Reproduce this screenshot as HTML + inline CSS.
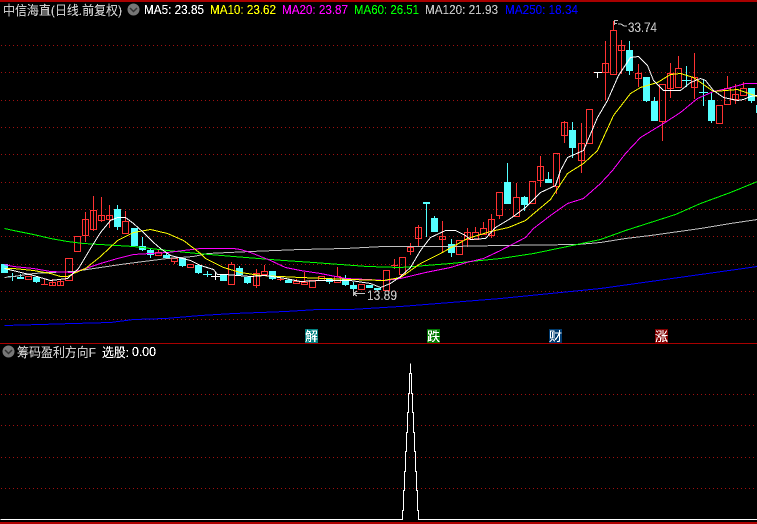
<!DOCTYPE html>
<html><head><meta charset="utf-8"><style>
html,body{margin:0;padding:0;background:#000}
body{width:757px;height:524px;overflow:hidden;position:relative}
svg{position:absolute;left:0;top:0}
text{font-family:"Liberation Sans","WenQuanYi Zen Hei","Noto Sans CJK SC",sans-serif;font-size:13px}
.c{font-family:"WenQuanYi Zen Hei","Liberation Sans","Noto Sans CJK SC",sans-serif;font-size:13px}
</style></head><body>
<svg width="757" height="524" viewBox="0 0 757 524" xmlns="http://www.w3.org/2000/svg">
<defs><filter id="px" x="0" y="0" width="100%" height="100%" filterUnits="userSpaceOnUse" color-interpolation-filters="sRGB"><feComponentTransfer><feFuncA type="discrete" tableValues="0 1 1"/></feComponentTransfer></filter></defs>
<rect width="757" height="524" fill="#000"/>
<g shape-rendering="crispEdges">
<path d="M1 45.5H757M1 72.5H757M1 100.5H757M1 127.5H757M1 154.5H757M1 182.5H757M1 209.5H757M1 236.5H757M1 264.5H757M1 291.5H757M1 319.5H757M1 394.5H757M1 425.5H757M1 457.5H757M1 488.5H757" stroke="#a01010" stroke-dasharray="1 3" fill="none"/>
<rect x="0" y="0" width="757" height="2" fill="#a80000"/>
<rect x="0" y="343" width="757" height="1" fill="#a80000"/>
<rect x="0" y="522" width="757" height="2" fill="#b00000"/>

<!-- red wicks -->
<path stroke="#ff3232" fill="none" d="M44.5 279V284M52.5 279V286M60.5 279V285M77.5 251V252M85.5 212V242M93.5 196V231M101.5 197V222M109.5 205V228M125.5 211V221M158.5 250V252M174.5 261V264M231.5 262V264M256.5 269V288M264.5 265V271M280.5 277V281M296.5 279V281M304.5 272V282M337.5 267V276M361.5 289V290M394.5 259V269M410.5 243V255M418.5 225V247M442.5 221V252M467.5 228V247M475.5 227V232M483.5 222V228M491.5 214V238M499.5 215V219M516.5 183V197M540.5 156V187M556.5 186V194M564.5 121V143M581.5 123V173M605.5 41V100M613.5 21V30M621.5 40V74M638.5 64V87M662.5 121V141M670.5 63V98M678.5 56V68M694.5 53V99M727.5 76V88M735.5 84V104M743.5 82V88"/>
<!-- red bodies -->
<path stroke="#ff3232" fill="none" d="M25.5 276.5h6v3h-6zM41 284.5h7M49.5 282.5h6v3h-6zM57.5 281.5h6v4h-6zM65.5 258.5h7v22h-7zM74.5 236.5h6v15h-6zM82.5 219.5h6v16h-6zM90.5 210.5h6v19h-6zM98.5 215.5h6v5h-6zM106.5 215.5h6v4h-6zM122.5 221.5h6v12h-6zM155.5 252.5h6v3h-6zM171.5 258.5h6v3h-6zM187.5 264.5h6v3h-6zM228.5 264.5h6v20h-6zM253.5 273.5h6v12h-6zM261.5 271.5h6v3h-6zM277 279.5h7M293.5 281.5h6v2h-6zM301.5 282.5h6v2h-6zM309.5 280.5h6v7h-6zM318.5 276.5h6v4h-6zM334.5 276.5h6v6h-6zM358.5 284.5h6v5h-6zM383.5 270.5h6v20h-6zM391 265.5h7M399.5 257.5h6v17h-6zM407.5 247.5h6v4h-6zM415.5 227.5h6v11h-6zM439.5 236.5h6v3h-6zM456.5 240.5h6v14h-6zM464.5 232.5h6v7h-6zM472.5 232.5h6v7h-6zM480.5 228.5h6v6h-6zM488.5 219.5h6v16h-6zM496.5 192.5h6v23h-6zM513.5 197.5h6v19h-6zM529.5 181.5h6v22h-6zM537.5 166.5h6v14h-6zM553.5 153.5h6v33h-6zM561.5 122.5h6v13h-6zM578.5 143.5h6v17h-6zM586.5 109.5h6v34h-6zM602.5 63.5h6v9h-6zM610.5 30.5h6v44h-6zM618.5 45.5h6v5h-6zM635.5 73.5h6v5h-6zM659.5 84.5h6v37h-6zM667.5 73.5h6v15h-6zM675.5 68.5h6v19h-6zM691.5 77.5h6v10h-6zM716.5 105.5h6v18h-6zM724.5 88.5h6v16h-6zM732.5 94.5h6v5h-6zM740.5 88.5h6v7h-6z"/>
<!-- cyan wicks -->
<path stroke="#54ffff" fill="none" d="M12.5 273V281M8 276.5h8M20.5 274V278M36.5 281V283M117.5 205V230M134.5 245V247M142.5 237V251M150.5 248V258M166.5 252V256M182.5 265V267M198.5 272V274M207.5 271V277M203 274.5h9M239.5 266V269M247.5 282V284M272.5 278V280M288.5 279V281M329.5 281V284M345.5 275V286M353.5 282V292M377.5 289V291M426.5 203V237M434.5 216V219M451.5 239V257M507.5 163V183M524.5 196V211M548.5 172V180M572.5 122V158M629.5 41V75M646.5 100V102M654.5 97V102M686.5 66V87M682 80.5h9M703.5 79V106M699 92.5h9M711.5 92V123M751.5 100V103"/>
<!-- cyan bodies -->
<path fill="#54ffff" d="M1 264h7v9H1zM17 277h7v2h-7zM33 277h7v5h-7zM114 209h7v18h-7zM131 228h7v18h-7zM139 246h7v4h-7zM147 250h7v5h-7zM163 255h7v3h-7zM179 258h7v8h-7zM195 265h7v8h-7zM220 274h7v7h-7zM236 268h7v7h-7zM244 277h7v6h-7zM269 271h7v8h-7zM285 280h7v3h-7zM326 279h7v3h-7zM342 279h7v6h-7zM350 285h7v4h-7zM366 285h7v3h-7zM374 288h7v2h-7zM423 202h7v2h-7zM431 218h7v14h-7zM448 244h7v9h-7zM504 182h7v22h-7zM521 197h7v8h-7zM545 179h7v4h-7zM569 130h7v18h-7zM626 50h7v21h-7zM643 77h7v24h-7zM651 101h7v20h-7zM708 100h7v21h-7zM748 88h7v13h-7zM756 105h1v8h-1z"/>
<path stroke="#fff" fill="none" d="M215.5 272V280M211 276.5h9M594 72.5h8M597.5 72V78"/>

<g transform="translate(.5 .5)" fill="none">
<!-- MA250 -->
<polyline stroke="#0000ff" points="4,325 40,324 73,323 110,322 133,319 165,318 200,315 233,313 260,312 285,311 317,309 350,309 383,307 400,306 450,302 500,298 550,293 600,288 650,281 700,274 757,266"/>
<!-- MA120 -->
<polyline stroke="#c0c0c0" points="4,277 13,276 33,273 50,272 73,271 100,267 120,264 143,261 167,258 193,256 207,253 250,251 300,249 345,248 383,246 400,246 450,246 500,245 577,244 600,242 625,238 650,235 700,228 730,223 757,219"/>
<!-- MA60 -->
<polyline stroke="#00ff00" points="4,228 13,230 33,234 50,238 67,241 83,243 133,246 167,250 197,253 233,256 283,260 313,262 340,264 367,266 400,267 450,263 500,258 533,253 567,246 600,239 625,230 650,222 675,214 700,203 730,192 757,181"/>
<!-- MA20 -->
<polyline stroke="#ff00ff" points="4,264 13,266 33,268 50,271 73,272 85,268 100,263 117,258 133,254 150,253 167,252 183,250 200,248 233,248 240,249 250,252 260,256 270,260 285,267 300,270 320,273 345,278 367,279 385,280 400,278 425,272 450,267 466,262 483,258 500,250 525,237 533,228 550,215 567,203 583,198 600,183 612,170 625,153 640,137 663,123 680,112 697,98 713,91 727,88 745,83 757,83"/>
<!-- MA10 -->
<polyline stroke="#ffff00" points="4,268 13,268 33,270 50,273 60,276 67,276 73,273 85,268 100,256 117,240 133,232 150,229 167,233 183,240 200,253 205,258 223,267 240,272 260,275 300,277 350,279 383,280 400,277 420,263 440,253 467,238 490,231 508,227 525,220 550,199 567,173 583,163 597,150 613,115 630,93 640,87 657,82 670,74 680,73 693,77 713,91 725,90 737,89 757,96"/>
<!-- MA5 -->
<polyline stroke="#ffffff" points="4,268 33,275 50,280 67,278 78,268 90,248 100,232 110,220 117,217 125,217 133,223 143,232 153,242 160,248 170,255 190,260 200,265 213,269 217,274 225,274 250,276 265,275 285,278 300,281 320,280 350,280 370,283 380,287 390,283 400,276 410,267 420,250 430,237 445,230 455,230 465,235 470,239 485,238 495,227 510,218 525,207 540,192 555,185 560,170 567,157 583,150 597,117 607,100 618,75 630,57 638,56 647,65 653,80 663,90 680,90 690,82 700,78 705,80 713,90 723,97 737,100 743,99 750,96 757,95"/>
<!-- bottom indicator -->
<polyline stroke="#ffffff" points="0,519 402,519 402,510 403,510 403,490 404,490 404,471 405,471 405,451 406,451 406,432 407,432 407,412 408,412 408,393 409,393 409,373 410,373 410,363"/>
<polyline stroke="#ffffff" points="410,363 410,373 411,373 411,393 412,393 412,412 413,412 413,432 414,432 414,451 415,451 415,471 416,471 416,490 417,490 417,510 418,510 418,519 757,519"/>
</g>

<!-- high / low marks -->
<path stroke="#c0c0c0" fill="none" d="M614.5 20V25M614 20.5h4M614 23.5h3M618 24h3l3 2h3"/>
<path stroke="#c0c0c0" fill="none" d="M353.5 290V296M354 293.5h11M354 293l3-2M354 294l3 2"/>

<!-- markers -->
<rect x="305" y="329" width="13" height="14" fill="#008080"/>
<rect x="427" y="329" width="13" height="14" fill="#007800"/>
<rect x="549" y="329" width="13" height="14" fill="#003a6e"/>
<rect x="655" y="329" width="13" height="14" fill="#800000"/>
</g>
<g filter="url(#px)">
<text class="c" x="305" y="341" fill="#fff">解</text>
<text class="c" x="427" y="341" fill="#fff">跌</text>
<text class="c" x="549" y="341" fill="#fff">财</text>
<text class="c" x="655" y="341" fill="#fff">涨</text>

<!-- headers -->
<text class="c" x="3" y="15" fill="#c8c8c8" textLength="119" lengthAdjust="spacingAndGlyphs">中信海直(日线.前复权)</text>
<text x="144" y="14" fill="#fff" textLength="60" lengthAdjust="spacingAndGlyphs">MA5: 23.85</text>
<text x="210" y="14" fill="#ffff00" textLength="66" lengthAdjust="spacingAndGlyphs">MA10: 23.62</text>
<text x="282" y="14" fill="#ff00ff" textLength="66" lengthAdjust="spacingAndGlyphs">MA20: 23.87</text>
<text x="354" y="14" fill="#00ff00" textLength="65" lengthAdjust="spacingAndGlyphs">MA60: 26.51</text>
<text x="425" y="14" fill="#c0c0c0" textLength="73" lengthAdjust="spacingAndGlyphs">MA120: 21.93</text>
<text x="505" y="14" fill="#0000ff" textLength="73" lengthAdjust="spacingAndGlyphs">MA250: 18.34</text>
<text x="628" y="32" fill="#c0c0c0" textLength="29" lengthAdjust="spacingAndGlyphs" style="font-size:14px">33.74</text>
<text x="367" y="300" fill="#c0c0c0" textLength="30" lengthAdjust="spacingAndGlyphs" style="font-size:14px">13.89</text>

<text class="c" x="17" y="357" fill="#c8c8c8" textLength="79" lengthAdjust="spacingAndGlyphs">筹码盈利方向F</text>
<text class="c" x="102" y="357" fill="#fff" textLength="27" lengthAdjust="spacingAndGlyphs">选股:</text>
<text x="132" y="356" fill="#fff" textLength="24" lengthAdjust="spacingAndGlyphs">0.00</text>
</g>
<circle cx="133.5" cy="9.5" r="6" fill="#777"/>
<path d="M130 8l3.5 3.5L137 8" fill="none" stroke="#333" stroke-width="1.5"/>
<circle cx="8.5" cy="351.5" r="6" fill="#777"/>
<path d="M5 350l3.5 3.5L12 350" fill="none" stroke="#333" stroke-width="1.5"/>
</svg>
</body></html>
